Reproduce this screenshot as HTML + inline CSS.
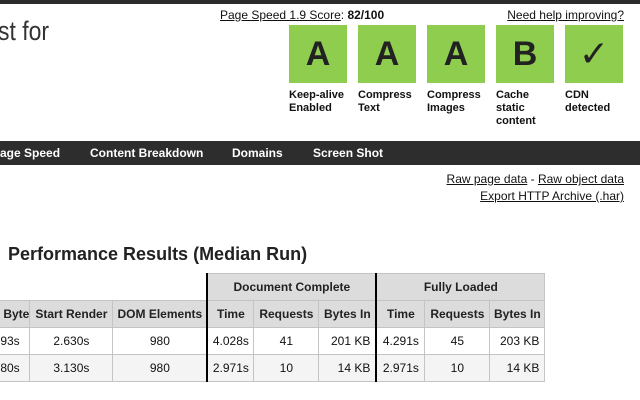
<!DOCTYPE html>
<html><head><style>
body{margin:0;width:640px;height:400px;overflow:hidden;background:#fff;font-family:"Liberation Sans",Arial,sans-serif;color:#111;position:relative}
.a{position:absolute;white-space:nowrap}
a{color:#111;text-decoration:underline}
.box{position:absolute;top:25px;width:58px;height:58px;background:#8fcd4f;color:#222;font:bold 34px "Liberation Sans",sans-serif;text-align:center;line-height:58px}
.lbl{position:absolute;top:89px;font:bold 11px/13px "Liberation Sans",sans-serif;color:#111}
table{position:absolute;left:-27px;top:273px;border-collapse:collapse;font-size:12px}
td,th{border:1px solid #c4c4c4;text-align:center;padding:0;height:26px;white-space:nowrap}
th{background:#dcdcdc;font-weight:bold;color:#222}
tr.r2 td{background:#f4f4f4}
.tl{border-left:2px solid #000}
</style></head><body>
<div class="a" style="left:0;top:0;width:640px;height:4px;background:#2b2b2b"></div>
<div class="a" style="left:-2px;top:16px;font-size:27px;color:#333;transform:scaleX(0.85);transform-origin:left">st for</div>
<div class="a" style="left:220px;top:8px;font-size:12px"><a>Page Speed 1.9 Score</a>: <b>82/100</b></div>
<div class="a" style="right:16px;top:8px;font-size:12px"><a>Need help improving?</a></div>
<div class="box" style="left:289px">A</div>
<div class="box" style="left:358px">A</div>
<div class="box" style="left:427px">A</div>
<div class="box" style="left:496px">B</div>
<div class="box" style="left:565px;font-weight:normal;font-size:36px">✓</div>
<div class="lbl" style="left:289px">Keep-alive<br>Enabled</div>
<div class="lbl" style="left:358px">Compress<br>Text</div>
<div class="lbl" style="left:427px">Compress<br>Images</div>
<div class="lbl" style="left:496px">Cache<br>static<br>content</div>
<div class="lbl" style="left:565px">CDN<br>detected</div>
<div class="a" style="left:0;top:141px;width:640px;height:24px;background:#2d2d2d;color:#fff;font:bold 12px/24px 'Liberation Sans',sans-serif">
<span class="a" style="left:0">age Speed</span><span class="a" style="left:90px">Content Breakdown</span><span class="a" style="left:232px">Domains</span><span class="a" style="left:313px">Screen Shot</span></div>
<div class="a" style="right:16px;top:171px;font-size:12px;text-align:right;line-height:17px"><a>Raw page data</a> - <a>Raw object data</a><br><a>Export HTTP Archive (.har)</a></div>
<div class="a" style="left:8px;top:244px;font:bold 18px 'Liberation Sans',sans-serif;color:#222">Performance Results (Median Run)</div>
<table>
<tr style="height:27px"><th colspan="3" style="background:#fff;border:none;border-right:0"></th><th colspan="3" class="tl">Document Complete</th><th colspan="3" class="tl">Fully Loaded</th></tr>
<tr><th style="width:51px">First Byte</th><th style="width:82px">Start Render</th><th style="width:93px">DOM Elements</th><th class="tl" style="width:45px">Time</th><th style="width:64px">Requests</th><th style="width:56px">Bytes In</th><th class="tl" style="width:47px">Time</th><th style="width:64px">Requests</th><th style="width:54px">Bytes In</th></tr>
<tr><td>0.393s</td><td>2.630s</td><td>980</td><td class="tl">4.028s</td><td>41</td><td style="text-align:right;padding-right:5px">201 KB</td><td class="tl">4.291s</td><td>45</td><td style="text-align:right;padding-right:5px">203 KB</td></tr>
<tr class="r2"><td>0.380s</td><td>3.130s</td><td>980</td><td class="tl">2.971s</td><td>10</td><td style="text-align:right;padding-right:5px">14 KB</td><td class="tl">2.971s</td><td>10</td><td style="text-align:right;padding-right:5px">14 KB</td></tr>
</table>
</body></html>
